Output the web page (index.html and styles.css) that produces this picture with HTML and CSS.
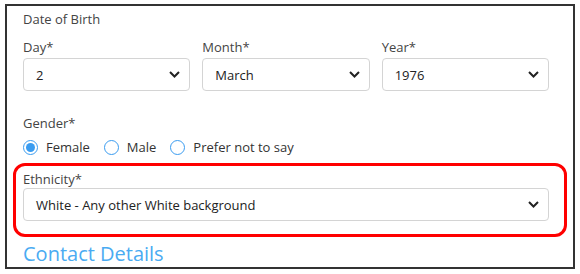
FILE: index.html
```html
<!DOCTYPE html>
<html lang="en">
<head>
  <meta charset="UTF-8" />
  <title>Personal Details</title>
  <link rel="stylesheet" href="styles.css">
</head>
<body>
  <div class="frame">
    <div class="section-title">Date of Birth</div>

    <div class="dob-row">
      <div class="field">
        <label>Day*</label>
        <div class="select">
          <span>2</span>
          <svg class="chev" width="11" height="7" viewBox="0 0 11 7"><path d="M1 1l4.5 4.5L10 1" fill="none" stroke="#222" stroke-width="2"/></svg>
        </div>
      </div>
      <div class="field">
        <label>Month*</label>
        <div class="select">
          <span>March</span>
          <svg class="chev" width="11" height="7" viewBox="0 0 11 7"><path d="M1 1l4.5 4.5L10 1" fill="none" stroke="#222" stroke-width="2"/></svg>
        </div>
      </div>
      <div class="field">
        <label>Year*</label>
        <div class="select">
          <span>1976</span>
          <svg class="chev" width="11" height="7" viewBox="0 0 11 7"><path d="M1 1l4.5 4.5L10 1" fill="none" stroke="#222" stroke-width="2"/></svg>
        </div>
      </div>
    </div>

    <div class="gender">
      <label>Gender*</label>
      <div class="radios">
        <span class="radio checked"></span><span class="opt">Female</span>
        <span class="radio"></span><span class="opt">Male</span>
        <span class="radio"></span><span class="opt">Prefer not to say</span>
      </div>
    </div>

    <div class="highlight">
      <label>Ethnicity*</label>
      <div class="select">
        <span>White - Any other White background</span>
        <svg class="chev" width="11" height="7" viewBox="0 0 11 7"><path d="M1 1l4.5 4.5L10 1" fill="none" stroke="#222" stroke-width="2"/></svg>
      </div>
    </div>

    <h2>Contact Details</h2>
  </div>
</body>
</html>
```

FILE: styles.css
```css
* {
  margin: 0;
  padding: 0;
  box-sizing: border-box;
  font-family: 'Open Sans', 'Noto Sans', sans-serif;
}

body {
  background: #fff;
  padding: 4px 5px 0 5px;
  color: #333;
}

.frame {
  width: 570px;
  height: 265px;
  border: 2px solid #333;
  padding: 4px 24px 0 16px;
  overflow: hidden;
}

.section-title {
  font-size: 13px;
  line-height: 18px;
  color: #444;
}

label {
  display: block;
  font-size: 13px;
  line-height: 18px;
  color: #444;
  margin-bottom: 2px;
}

.dob-row {
  display: grid;
  grid-template-columns: 1fr 1fr 1fr;
  gap: 12px;
  margin-top: 10px;
}

.select {
  display: flex;
  align-items: center;
  justify-content: space-between;
  height: 33px;
  border: 1px solid #d4d4d4;
  border-radius: 4px;
  padding: 0 9px 0 12px;
  font-size: 13px;
  color: #222;
}

.gender {
  margin-top: 23px;
}

.radios {
  display: flex;
  align-items: center;
  margin-top: 6px;
  font-size: 13px;
  color: #333;
}

.radio {
  width: 15px;
  height: 15px;
  border: 1.5px solid #3a9cf0;
  border-radius: 50%;
  margin-right: 8px;
  display: flex;
  align-items: center;
  justify-content: center;
}

.radio.checked::after {
  content: "";
  width: 9px;
  height: 9px;
  border-radius: 50%;
  background: #3a9cf0;
}

.opt {
  margin-right: 14px;
}

.highlight {
  margin: 7px -18px 0 -10px;
  border: 3px solid #f00;
  border-radius: 12px;
  padding: 4px 15px 13px 7px;
}

.highlight label {
  margin-bottom: 0;
}

h2 {
  margin-top: 3px;
  font-size: 20px;
  font-weight: 400;
  color: #4aabf2;
}
```
